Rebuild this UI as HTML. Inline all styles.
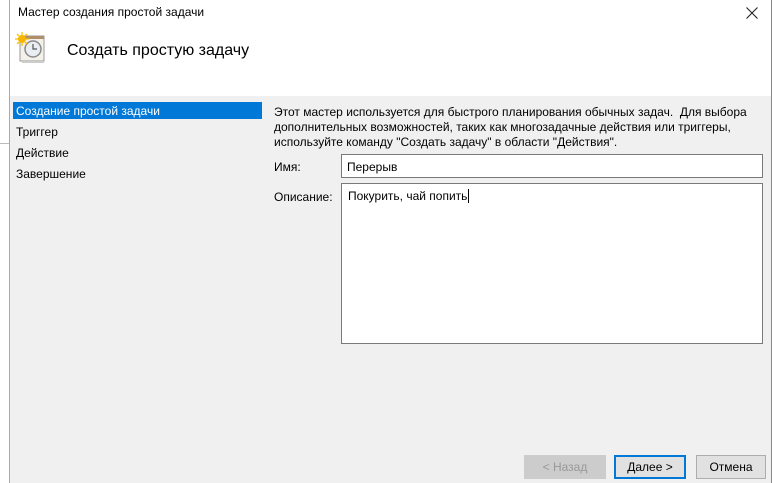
<!DOCTYPE html>
<html><head><meta charset="utf-8"><style>
body{margin:0;width:772px;height:483px;overflow:hidden;background:#fff;font-family:"Liberation Sans",sans-serif;font-size:12px;color:#000;position:relative}
.a{position:absolute}
.win{left:9px;top:0;width:761px;height:483px;border-left:1px solid #aaa;border-right:1px solid #888;background:#fff}
.body{left:10px;top:96px;width:761px;height:387px;background:#f0f0f0}
.nav div{position:absolute;left:13px;width:249px;height:17px;line-height:18px;padding-left:3px;box-sizing:border-box}
.box{background:#fff;border:1px solid #7a7a7a;box-sizing:border-box}
.btn{border:1px solid #adadad;background:#e1e1e1;text-align:center;line-height:23px;box-sizing:border-box;height:24px;top:455px}
</style></head><body>
<div class="a" style="left:0;top:143px;width:9px;height:1px;background:#bbb"></div>
<div class="a win"></div>
<div class="a body"></div>
<div class="a" style="left:18px;top:5px;font-size:12px">Мастер создания простой задачи</div>
<svg class="a" style="left:746px;top:7px" width="12" height="12" viewBox="0 0 12 12"><path d="M0.5 0.5L11.5 11.5M11.5 0.5L0.5 11.5" stroke="#222" stroke-width="1.1"/></svg>
<svg class="a" style="left:14px;top:32px" width="34" height="34" viewBox="0 0 34 34">
<rect x="6" y="4" width="24" height="25" fill="#f4f1ea" stroke="#9a9a9a"/>
<rect x="6" y="4" width="24" height="3" fill="#b08e6a"/>
<rect x="8" y="29" width="22" height="2" fill="#ccc"/>
<circle cx="19" cy="17" r="8" fill="#e9eef2" stroke="#8a8a8a" stroke-width="1.5"/>
<path d="M19 12v5h4" stroke="#555" fill="none" stroke-width="1.2"/>
<circle cx="8" cy="7" r="4" fill="#f7b500"/>
<path d="M8 0v3M8 11v3M1 7h3M12 7h3M3 2l2 2M11 10l2 2M13 2l-2 2M3 12l2-2" stroke="#f7c000" stroke-width="1.3"/>
</svg>
<div class="a" style="left:67px;top:42px;font-size:16px">Создать простую задачу</div>
<div class="nav">
<div style="top:102px;background:#0078d7;color:#fff">Создание простой задачи</div>
<div style="top:123px">Триггер</div>
<div style="top:144px">Действие</div>
<div style="top:165px">Завершение</div>
</div>
<div class="a" style="left:274px;top:105px;line-height:15px;width:490px">Этот мастер используется для быстрого планирования обычных задач.&nbsp; Для выбора дополнительных возможностей, таких как многозадачные действия или триггеры, используйте команду "Создать задачу" в области "Действия".</div>
<div class="a" style="left:274px;top:160px">Имя:</div>
<div class="a box" style="left:341px;top:154px;width:422px;height:24px;padding:5px 5px">Перерыв</div>
<div class="a" style="left:274px;top:190px">Описание:</div>
<div class="a box" style="left:341px;top:183px;width:422px;height:161px;padding:5px 6px">Покурить, чай попить<span style="border-left:1px solid #000;margin-left:1px"></span></div>
<div class="a btn" style="left:524px;width:82px;color:#999;border-color:#ccc;background:#ccc">&lt; Назад</div>
<div class="a btn" style="left:614px;width:72px;border:2px solid #0078d7;line-height:21px">Далее &gt;</div>
<div class="a btn" style="left:696px;width:70px">Отмена</div>
</body></html>
